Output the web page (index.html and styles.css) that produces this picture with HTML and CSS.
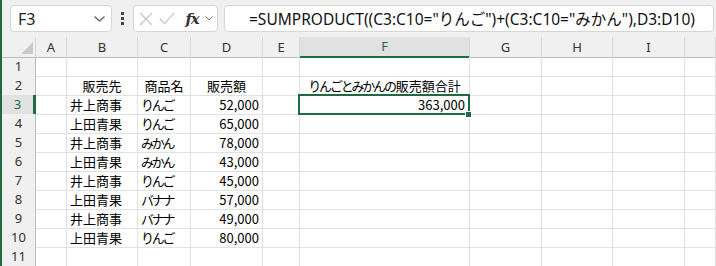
FILE: index.html
```html
<!DOCTYPE html>
<html lang="ja">
<head>
    <meta charset="UTF-8">
    <title>SUMPRODUCT</title>
    <link rel="stylesheet" href="styles.css">
</head>
<body>
    <!-- 数式バー -->
    <div class="toolbar">
        <div class="namebox">
            <span>F3</span>
            <svg class="chev" width="11" height="6" viewBox="0 0 11 6"><path d="M0.5 0.5 L5.5 5 L10.5 0.5" fill="none" stroke="#555" stroke-width="1.1"/></svg>
        </div>
        <div class="grip"><i></i><i></i><i></i></div>
        <div class="fxbox">
            <svg width="14" height="14" viewBox="0 0 14 14"><path d="M1 1 L13 13 M13 1 L1 13" stroke="#c4c4c4" stroke-width="1.2"/></svg>
            <svg width="16" height="13" viewBox="0 0 16 13"><path d="M0.8 6.5 L5.5 11.6 L15.2 0.8" fill="none" stroke="#c4c4c4" stroke-width="1.2"/></svg>
            <span class="fx">fx</span>
            <svg class="chev-s" width="8" height="5" viewBox="0 0 8 5"><path d="M0.5 0.5 L4 4 L7.5 0.5" fill="none" stroke="#777" stroke-width="1"/></svg>
        </div>
        <div class="formula">=SUMPRODUCT((C3:C10="りんご")+(C3:C10="みかん"),D3:D10)</div>
    </div>

    <!-- シート -->
    <div class="sheet">
        <div class="row head">
            <div class="corner"></div>
            <div>A</div><div>B</div><div>C</div><div>D</div><div>E</div>
            <div class="sel">F</div><div>G</div><div>H</div><div>I</div><div></div>
        </div>
        <div class="row">
            <div class="rh">1</div>
            <div></div><div></div><div></div><div></div><div></div><div></div><div></div><div></div><div></div><div></div>
        </div>
        <div class="row">
            <div class="rh">2</div>
            <div></div><div class="c">販売先</div><div class="c">商品名</div><div class="c">販売額</div><div></div>
            <div class="c">
                <span class="k">りんごとみかんの</span>販売額合計
            </div><div></div><div></div><div></div><div></div>
        </div>
        <div class="row">
            <div class="rh sel">3</div>
            <div></div><div>井上商事</div><div class="k">りんご</div><div class="n">52,000</div><div></div>
            <div class="n active">363,000</div><div></div><div></div><div></div><div></div>
        </div>
        <div class="row">
            <div class="rh">4</div>
            <div></div><div>上田青果</div><div class="k">りんご</div><div class="n">65,000</div><div></div><div></div><div></div><div></div><div></div><div></div>
        </div>
        <div class="row">
            <div class="rh">5</div>
            <div></div><div>井上商事</div><div class="k">みかん</div><div class="n">78,000</div><div></div><div></div><div></div><div></div><div></div><div></div>
        </div>
        <div class="row">
            <div class="rh">6</div>
            <div></div><div>上田青果</div><div class="k">みかん</div><div class="n">43,000</div><div></div><div></div><div></div><div></div><div></div><div></div>
        </div>
        <div class="row">
            <div class="rh">7</div>
            <div></div><div>井上商事</div><div class="k">りんご</div><div class="n">45,000</div><div></div><div></div><div></div><div></div><div></div><div></div>
        </div>
        <div class="row">
            <div class="rh">8</div>
            <div></div><div>上田青果</div><div class="k">バナナ</div><div class="n">57,000</div><div></div><div></div><div></div><div></div><div></div><div></div>
        </div>
        <div class="row">
            <div class="rh">9</div>
            <div></div><div>井上商事</div><div class="k">バナナ</div><div class="n">49,000</div><div></div><div></div><div></div><div></div><div></div><div></div>
        </div>
        <div class="row">
            <div class="rh">10</div>
            <div></div><div>上田青果</div><div class="k">りんご</div><div class="n">80,000</div><div></div><div></div><div></div><div></div><div></div><div></div>
        </div>
        <div class="row">
            <div class="rh">11</div>
            <div></div><div></div><div></div><div></div><div></div><div></div><div></div><div></div><div></div><div></div>
        </div>
    </div>
</body>
</html>
```

FILE: styles.css
```css
/* 全体 */
body, html {
    margin: 0;
    padding: 0;
    background-color: #f0f0f0;
    font-family: "Segoe UI", "Noto Sans", "Noto Sans CJK JP", sans-serif;
    overflow: hidden;
}

body {
    border-left: 2px solid #1f6b41;
    height: 266px;
    box-sizing: border-box;
}

/* 数式バー */
.toolbar {
    display: flex;
    align-items: center;
    height: 37px;
    padding: 0 2px 0 8px;
    box-sizing: border-box;
}

.namebox, .fxbox, .formula {
    height: 27px;
    background-color: #fff;
    border: 1px solid #d6d6d6;
    border-radius: 4px;
    box-sizing: border-box;
    display: flex;
    align-items: center;
}

.namebox {
    width: 102px;
    padding: 0 6px 0 7px;
    justify-content: space-between;
    font-size: 16px;
    color: #222;
}

.grip {
    width: 21px;
    display: flex;
    flex-direction: column;
    align-items: center;
    gap: 2.5px;
}

.grip i {
    width: 2.5px;
    height: 2.5px;
    background-color: #444;
}

.fxbox {
    width: 85px;
    padding: 0 4px 0 5px;
    justify-content: space-between;
}

.fxbox .fx {
    font-family: "DejaVu Serif", "Liberation Serif", serif;
    font-style: italic;
    font-weight: bold;
    font-size: 15px;
    color: #333;
    letter-spacing: -1px;
    margin-left: 4px;
}

.formula {
    flex: 1;
    margin-left: 6px;
    padding-left: 24px;
    font-size: 15.5px;
    color: #111;
    white-space: nowrap;
    overflow: hidden;
}

/* シート */
.sheet {
    background-color: #fff;
}

.row {
    display: grid;
    grid-template-columns: 34px 31px 71px 53px 72px 37px 170px 72px 71px 72px 1fr;
    height: 19px;
}

.row > div {
    border-right: 1px solid #e1e1e1;
    border-bottom: 1px solid #e1e1e1;
    box-sizing: border-box;
    font-family: "Noto Sans CJK JP", sans-serif;
    font-size: 13px;
    line-height: 19px;
    padding: 0 3px;
    white-space: nowrap;
    color: #000;
    display: flex;
    align-items: center;
}

/* かなは詰めて表示 */
.row .k {
    letter-spacing: -2.2px;
}

.row span.k {
    margin-right: 1px;
}

.row .c {
    justify-content: center;
}

.row .n {
    justify-content: flex-end;
}

/* 見出し */
.row.head {
    height: 20px;
    background-color: #f0f0f0;
}

.row.head > div {
    justify-content: center;
    font-family: "Segoe UI", "Noto Sans", sans-serif;
    font-size: 13px;
    color: #333;
    border-right: 1px solid #d8d8d8;
    border-bottom: 1px solid #bcbcbc;
}

.row.head .sel {
    background-color: #e1e1e1;
    color: #1f6b41;
    border-bottom: 2px solid #1f6b41;
}

.row .corner {
    position: relative;
}

.row .corner::after {
    content: "";
    position: absolute;
    right: 2px;
    bottom: 3px;
    border-style: solid;
    border-width: 0 0 12px 12px;
    border-color: transparent transparent #cacaca transparent;
}

.row .rh {
    background-color: #f0f0f0;
    justify-content: center;
    font-family: "Segoe UI", "Noto Sans", sans-serif;
    font-size: 13px;
    color: #333;
    border-right: 1px solid #bcbcbc;
    border-bottom: 1px solid #dadada;
}

.row .rh.sel {
    background-color: #e1e1e1;
    color: #1f6b41;
    border-right: 3px solid #1f6b41;
}

/* 選択セル */
.row .active {
    position: relative;
    padding-right: 4px;
}

.row .active::before {
    content: "";
    position: absolute;
    left: -2px;
    top: -1px;
    right: -1px;
    bottom: -1px;
    border: 2px solid #1f6b41;
}

.row .active::after {
    content: "";
    position: absolute;
    right: -3px;
    bottom: -4px;
    width: 5px;
    height: 5px;
    background-color: #1f6b41;
    border: 1px solid #fff;
}
```
